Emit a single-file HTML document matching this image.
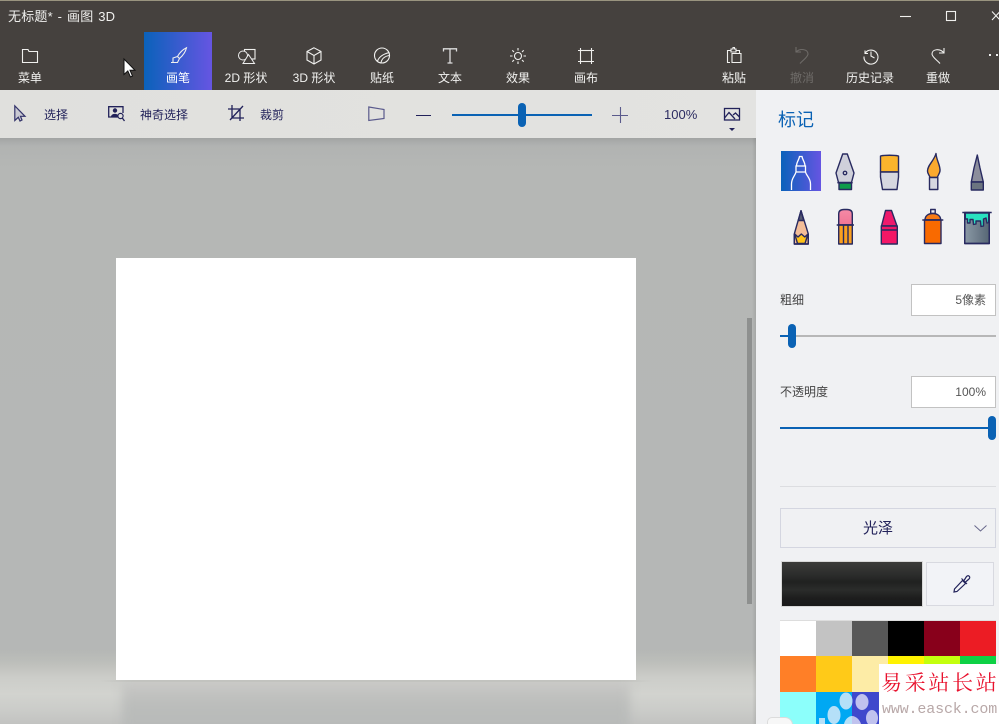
<!DOCTYPE html>
<html lang="zh"><head><meta charset="utf-8"><title>画图 3D</title>
<style>
*{box-sizing:border-box}
html,body{margin:0;padding:0;width:999px;height:724px;overflow:hidden;background:#b5b7b6}
body{position:relative;font-family:"Liberation Sans","Noto Sans CJK SC",sans-serif;font-size:12px}
.a{position:absolute}
.t{position:absolute;white-space:nowrap;text-align:center;line-height:16px}
.nav{color:#f2f2f0;top:70px;width:68px}
.sub{color:#22225a;top:107px}
svg{position:absolute;overflow:visible}
.w{fill:none;stroke:#f0f0ee;stroke-width:1.1}
.d{fill:none;stroke:#22225a;stroke-width:1.3}
.i path,.i rect,.i circle{stroke:#282a60;stroke-width:1.4;stroke-linejoin:round}
.sw{position:absolute;width:36px;height:36px}
</style></head><body>

<div class="a" style="left:0;top:0;width:999px;height:90px;background:#45413e"></div>
<div class="a" style="left:0;top:0;width:999px;height:1px;background:#99947f"></div>
<div class="t" style="left:8px;top:9px;color:#f0f0ee;font-size:13px;letter-spacing:.2px;word-spacing:1px">无标题* - 画图 3D</div>

<svg style="left:900px;top:10px" width="99" height="14"><path class="w" d="M0 6.500H11"/><rect x="46.500" y="1.500" width="9" height="9" class="w"/><path class="w" d="M92 1.500L100 10M92 10L100 1.500"/></svg>

<div class="a" style="left:144px;top:32px;width:68px;height:58px;background:linear-gradient(90deg,#0a62ba,#6655e2)"></div>

<svg style="left:22px;top:49px" width="16" height="14"><path class="w" d="M.5 2.500V13.500H15.500V2.500H7L6 .5H.5Z"/></svg>
<svg style="left:170px;top:47px" width="18" height="18"><path class="w" d="M16.500 .8C13 2.500 9.500 6 7.500 9.500L9.500 11.500C12.500 9 15.500 5 16.500 .8ZM7.500 9.500L3 11V15.500H7.500L9.500 11.500M3 15.500H1"/></svg>
<svg style="left:238px;top:49px" width="18" height="15"><rect x="6.500" y=".5" width="10.500" height="9.500" class="w"/><circle cx="5" cy="6.500" r="4.500" fill="#45413e" stroke="#eee"/><path d="M10.500 5.500L16.500 14.500H5Z" fill="#45413e" stroke="#eee"/></svg>
<svg style="left:306px;top:47px" width="16" height="18"><path class="w" d="M8 .8L15 4.500V13L8 17L1 13V4.500ZM1 4.500L8 8.500L15 4.500M8 8.500V17"/></svg>
<svg style="left:374px;top:47px" width="16" height="17"><circle cx="8" cy="8.500" r="7.500" class="w"/><path class="w" d="M3.500 14C5 10 9 7 15.500 5.500M7 15.800C7.500 12.500 10 9.500 15 8.500"/></svg>
<svg style="left:443px;top:48px" width="14" height="16"><path d="M.5 3.500V.8H13.500V3.500M7 .8V15M4.500 15H9.500" fill="none" stroke="#ddd" stroke-width="1.300"/></svg>
<svg style="left:510px;top:48px" width="16" height="16"><circle cx="8" cy="8" r="3.500" class="w"/><path class="w" d="M8 0V2.500M8 13.500V16M0 8H2.500M13.500 8H16M2.300 2.300L4 4M12 12L13.700 13.700M2.300 13.700L4 12M12 4L13.700 2.300"/></svg>
<svg style="left:578px;top:48px" width="16" height="16"><rect x="2.500" y="2.500" width="11" height="11" class="w"/><path class="w" d="M2.500 0V2M13.500 0V2M2.500 14V16M13.500 14V16M0 2.500H2M0 13.500H2M14 2.500H16M14 13.500H16"/></svg>
<svg style="left:727px;top:47px" width="15" height="17"><path class="w" d="M3 15.500H.5V3.500H4M9 3.500H12.500V6M4 3.500V2H6V.6H7.500V2H9V5H4V3.500M5 6.500H14V15.500H5Z"/></svg>
<svg style="left:795px;top:47px" width="14" height="17"><path d="M1 0V5H6M1 5C5 1 13 2 13 7C13 10 8 13 5 16.500" fill="none" stroke="#6e6b68" stroke-width="1.100"/></svg>
<svg style="left:863px;top:48px" width="16" height="16"><path class="w" d="M2 2.500V5.500H5M2.300 5A7 7 0 1 1 1 8.500M8 3.500V8L11.500 10"/></svg>
<svg style="left:931px;top:47px" width="14" height="17"><path class="w" d="M13 1V6H8M13 6C9 1 1 2 1 7C1 10 6 13 9 16.500"/></svg>
<div class="a" style="left:989px;top:54px;width:2px;height:2px;background:#eee"></div>
<div class="a" style="left:996px;top:54px;width:2px;height:2px;background:#eee"></div>

<div class="t nav" style="left:-4px">菜单</div>
<div class="t nav" style="left:144px;color:#fff">画笔</div>
<div class="t nav" style="left:212px">2D 形状</div>
<div class="t nav" style="left:280px">3D 形状</div>
<div class="t nav" style="left:348px">贴纸</div>
<div class="t nav" style="left:416px">文本</div>
<div class="t nav" style="left:484px">效果</div>
<div class="t nav" style="left:552px">画布</div>
<div class="t nav" style="left:700px">粘贴</div>
<div class="t nav" style="left:768px;color:#6e6b68">撤消</div>
<div class="t nav" style="left:836px">历史记录</div>
<div class="t nav" style="left:904px">重做</div>

<svg style="left:123px;top:58px" width="13" height="20"><path d="M1 1V16.500L4.800 13L7.500 19L9.500 18L7 12.300H12Z" fill="#fff" stroke="#111" stroke-width="1"/></svg>

<!-- toolbar -->
<div class="a" style="left:0;top:90px;width:756px;height:48px;background:linear-gradient(90deg,#e0e0dd,#e3e3e1)"></div>

<svg style="left:14px;top:105px" width="13" height="17"><path d="M.8 .8V15.500L4.300 12.300L6 16L8 15L6.500 11.300H11Z" fill="#c9c9d2" stroke="#33336a" stroke-width="1.200"/></svg>
<svg style="left:108px;top:106px" width="17" height="16"><path class="d" d="M10 11H.7V.7H15V7"/><circle cx="7" cy="4.500" r="2.200" fill="#22225a"/><path d="M3 10.500C3.500 7 10 7 11 10.500Z" fill="#22225a"/><circle cx="12.500" cy="10" r="2.600" fill="#e0e0dd" stroke="#22225a" stroke-width="1.200"/><path class="d" d="M14.300 12L16.500 15"/></svg>
<svg style="left:228px;top:105px" width="17" height="17"><path class="d" d="M4 0V13H16M0 4H12V16M2 15L15 1"/></svg>
<svg style="left:368px;top:106px" width="17" height="16"><path d="M.8 1V14.500L16 12.500V3.500Z" fill="none" stroke="#5a5a8c" stroke-width="1.200"/></svg>
<div class="t sub" style="left:44px">选择</div>
<div class="t sub" style="left:140px">神奇选择</div>
<div class="t sub" style="left:260px">裁剪</div>
<div class="a" style="left:416px;top:115px;width:15px;height:1px;background:#22225a"></div>
<div class="a" style="left:452px;top:114px;width:140px;height:2px;background:#0a62b4"></div>
<div class="a" style="left:518px;top:103px;width:8px;height:24px;border-radius:4px;background:#0a62b4"></div>
<svg style="left:612px;top:107px" width="16" height="16"><path d="M0 8.500H16M8.500 0V16" stroke="#5a5a8c" stroke-width="1.100"/></svg>
<div class="t sub" style="left:664px;font-size:13px;color:#2c2c62">100%</div>
<svg style="left:724px;top:108px" width="16" height="24"><rect x=".5" y=".5" width="15" height="11.500" class="d"/><path class="d" d="M.5 10L5 4.500L11 11M9 7L11.500 5L15.500 9"/><path d="M5 20H11L8 23Z" fill="#22225a"/></svg>

<!-- canvas area -->
<div class="a" style="left:0;top:138px;width:756px;height:586px;overflow:hidden;background:linear-gradient(180deg,#a2a4a3 0,#a8aaa9 3px,#b1b3b2 8px,#b5b7b5 30px,#b5b7b6 500px)">
  <div class="a" style="left:0;top:512px;width:756px;height:74px;background:linear-gradient(180deg,#b5b7b5 0,#bcbeba 12px,#cccdc9 28px,#d2d3cf 44px,#cbccc9 60px,#c2c3c1 74px)"></div>
  <div class="a" style="left:122px;top:542px;width:508px;height:60px;filter:blur(5px);background:linear-gradient(180deg,#c9c9c7 0,#c5c5c3 8px,#bbbdbb 24px,#b8bab9 44px)"></div>
</div>
<div class="a" style="left:100px;top:680px;width:552px;height:2px;background:linear-gradient(90deg,rgba(190,190,186,0),#c2c3bf 6%,#c2c3bf 94%,rgba(190,190,186,0))"></div>
<div class="a" style="left:116px;top:258px;width:520px;height:422px;background:#fff"></div>
<div class="a" style="left:747px;top:318px;width:5px;height:286px;background:#8e908f"></div>
<div class="a" style="left:752px;top:138px;width:4px;height:586px;background:linear-gradient(90deg,rgba(0,0,0,0),rgba(0,0,0,.09))"></div>

<!-- right panel -->
<div class="a" style="left:756px;top:90px;width:243px;height:634px;background:#f0f1f3"></div>
<div class="t" style="left:778px;top:108px;font-size:18px;line-height:24px;color:#0a62b4">标记</div>

<div class="a" style="left:781px;top:151px;width:40px;height:40px;background:linear-gradient(90deg,#0a62ba,#6655e2)"></div>
<svg style="left:781px;top:151px" width="40" height="40"><path d="M10.500 39V33C10.500 27 14 25 15 21H24.500C25.500 25 29.500 27 29.500 33V39M15 15H24.500V21H15ZM15.500 15C15.500 11 18 9 18.500 5.500H21C21.500 9 24 11 24 15" fill="none" stroke="#fff" stroke-width="1.300"/></svg>

<svg class="i" style="left:770px;top:140px" width="229" height="115">
<defs>
<linearGradient id="g1" x1="0" x2="1"><stop offset="0" stop-color="#8b99a5"/><stop offset="1" stop-color="#566674"/></linearGradient>
<linearGradient id="g2" x1="0" y1="0" x2="0" y2="1"><stop offset="0" stop-color="#f58aa6"/><stop offset="1" stop-color="#ef7595"/></linearGradient>
</defs>
<!-- fountain pen -->
<path d="M72.700 14H77.300L84 33L81.500 42.500H68.500L66 33Z" fill="#cfd0da"/><circle cx="75" cy="33" r="1.700" fill="#f0f0f0"/>
<rect x="69" y="43" width="12.500" height="6.500" fill="#0e9b4a" stroke="none"/><path d="M67.300 42.700H82.700" fill="none"/>
<!-- flat brush -->
<path d="M110.500 16C115 15 124 15 128.500 16V32H110.500Z" fill="#fbb42c"/><path d="M110.500 32H128.500V37L127 49.500H112.500L110.500 37Z" fill="#d6d7e0"/>
<!-- round brush -->
<path d="M166 13.500C166.500 21 170.500 25 170 31C169.500 34 168 35 167.300 37.500H160C159.500 35 157.500 34 157.500 31C157.500 25 164 21 166 13.500Z" fill="#fba92e"/><path d="M159.500 37.500H167.800V49.500H159.500Z" fill="#d6d7e0"/>
<!-- calligraphy -->
<path d="M207.300 15L210 28L213.300 42H201.300L204 28Z" fill="#8c8e9c"/><path d="M201.300 42H213.300V50H201.300Z" fill="#6b7480"/>
<!-- pencil -->
<path d="M31 70.700L36.500 88L38.300 94V104H24.300V94L26 88Z" fill="#f3bd98"/><path d="M31 70.700L33.700 80.500L28.300 80.500Z" fill="#565a72"/><path d="M24.700 94L27.500 103.500H35L38 94L34.800 97L31.300 94L28 97Z" fill="#ffc21a" stroke="none"/><path d="M24.300 94V104H38.300V94" fill="none"/>
<!-- marker -->
<path d="M68.700 85V74C68.700 70.500 71 69.500 74 69.500H77C80 69.500 82.300 70.500 82.300 74V85Z" fill="url(#g2)"/><path d="M68.700 85H82.300V104H68.700Z" fill="#fba01f"/><path d="M66.700 85H84M73.500 85V104M78 85V104" fill="none"/>
<!-- crayon -->
<path d="M115.500 70.500H121.500L127 86H111.500Z" fill="#ee1a6c"/><path d="M111.300 86H127.300V104H111.300Z" fill="#f31766"/><path d="M111.300 90H127.300" fill="none"/>
<!-- spray -->
<rect x="160.700" y="69.500" width="4.500" height="4" fill="none"/><path d="M155 80C155 76 158 73.500 162.800 73.500C167.500 73.500 170.700 76 170.700 80Z" fill="#f77a14"/><path d="M154.500 80H171V103.500H154.500Z" fill="#f96a00"/><path d="M152.300 80H173.300" fill="none"/>
<!-- bucket -->
<path d="M194.700 72.500H219.300V103.500H194.700Z" fill="url(#g1)"/><path d="M195.300 73H218.700V78V82.500L217 83L216 78L213.500 79V86L211 86.500L210.500 81H206V84L203.500 84.500L203 79.500H200V83H197.500V79H195.300Z" fill="#28e2c0" stroke="none"/><path d="M192.300 72.500H221.700M194.700 72.500V103.500H219.300V72.500" fill="none"/>
</svg>

<div class="t" style="left:780px;top:292px;color:#444">粗细</div>
<div class="a" style="left:911px;top:284px;width:85px;height:32px;background:#fff;border:1px solid #c2c2c2"></div>
<div class="t" style="right:13px;top:292px;color:#555">5像素</div>
<div class="a" style="left:780px;top:335px;width:216px;height:2px;background:#b7b7b7"></div>
<div class="a" style="left:780px;top:335px;width:10px;height:2px;background:#0a62b4"></div>
<div class="a" style="left:788px;top:324px;width:8px;height:24px;border-radius:4px;background:#0a62b4"></div>

<div class="t" style="left:780px;top:384px;color:#444">不透明度</div>
<div class="a" style="left:911px;top:376px;width:85px;height:32px;background:#fff;border:1px solid #c2c2c2"></div>
<div class="t" style="right:13px;top:384px;color:#555">100%</div>
<div class="a" style="left:780px;top:427px;width:212px;height:2px;background:#0a62b4"></div>
<div class="a" style="left:988px;top:416px;width:8px;height:24px;border-radius:4px;background:#0a62b4"></div>

<div class="a" style="left:780px;top:486px;width:216px;height:1px;background:#dcdde0"></div>

<div class="a" style="left:780px;top:508px;width:216px;height:40px;border:1px solid #d4d6e0;background:#f0f1f3"></div>
<div class="t" style="left:780px;width:196px;top:521px;font-size:15px;color:#22225a">光泽</div>
<svg style="left:974px;top:525px" width="13" height="7"><path d="M.5 .5L6.500 6L12.500 .5" fill="none" stroke="#66668a" stroke-width="1"/></svg>

<div class="a" style="left:781px;top:561px;width:142px;height:46px;border:1px solid #d8d8d8;background:linear-gradient(180deg,#3c3c3a 0,#2a2b2a 14px,#202120 20px,#2b2c2b 28px,#1d1d1d 36px,#1a1a1a 100%)"></div>
<div class="a" style="left:926px;top:562px;width:68px;height:44px;border:1px solid #d8d9e0;background:#f2f3f7"></div>
<svg style="left:953px;top:574px" width="18" height="20"><path d="M1 18L1.500 15L9.500 6.500L12.500 9.500L4 17.500ZM8.500 4.500L14 10M11 6.500L13.500 2.500C15.500 .5 18 3 16 5L12.500 8" fill="#f2f3f7" stroke="#22225a" stroke-width="1.200"/></svg>

<div class="a" style="left:780px;top:620px;width:216px;height:104px;overflow:hidden">
<div class="sw" style="left:0;top:0;background:#fff"></div>
<div class="sw" style="left:36px;top:0;background:#c3c3c3"></div>
<div class="sw" style="left:72px;top:0;background:#585858"></div>
<div class="sw" style="left:108px;top:0;background:#000"></div>
<div class="sw" style="left:144px;top:0;background:#88001b"></div>
<div class="sw" style="left:180px;top:0;background:#ec1c24"></div>
<div class="sw" style="left:0;top:36px;background:#ff7f27"></div>
<div class="sw" style="left:36px;top:36px;background:#ffca18"></div>
<div class="sw" style="left:72px;top:36px;background:#fdeca6"></div>
<div class="sw" style="left:108px;top:36px;background:#fff200"></div>
<div class="sw" style="left:144px;top:36px;background:#c4ff0e"></div>
<div class="sw" style="left:180px;top:36px;background:#0ed145"></div>
<div class="sw" style="left:0;top:72px;background:#8cfffb"></div>
<div class="sw" style="left:36px;top:72px;background:#00a8f3"></div>
<div class="sw" style="left:72px;top:72px;background:#3f48cc"></div>
</div>
<div class="a" style="left:780px;top:620px;width:216px;height:1px;background:#ddd"></div>
<svg style="left:0;top:0" width="999" height="724">
<ellipse cx="846" cy="701" rx="6.500" ry="8.500" fill="#b5e0f8"/>
<ellipse cx="834" cy="715" rx="6.500" ry="9" fill="#b5e0f8"/>
<rect x="819" y="718" width="6" height="6" fill="#b5e0f8"/>
<ellipse cx="862" cy="702" rx="6.500" ry="8" fill="#c0c2ee"/>
<ellipse cx="872" cy="718" rx="6" ry="8" fill="#c0c2ee"/>
<path d="M844 724C845 719 849 716 852 716V724Z" fill="#b5e0f8"/>
<path d="M852 716C856 716 860 720 861 724H852Z" fill="#c0c2ee"/>
</svg>

<!-- watermark -->
<div class="a" style="left:879px;top:664px;width:120px;height:60px;background:#fff"></div>
<div class="t" style="left:881px;top:669px;font-family:'Liberation Serif','Noto Serif CJK SC',serif;font-size:21px;line-height:28px;letter-spacing:2.700px;color:#e8112d">易采站长站</div>
<div class="t" style="left:882px;top:701px;font-family:'Liberation Mono',monospace;font-size:15px;line-height:18px;letter-spacing:-.15px;color:#b8a8a8">www.easck.com</div>

<div class="a" style="left:767px;top:717px;width:26px;height:12px;background:#f7f7f7;border:1px solid #dcdcdc;border-radius:5px 8px 0 0"></div>
</body></html>
